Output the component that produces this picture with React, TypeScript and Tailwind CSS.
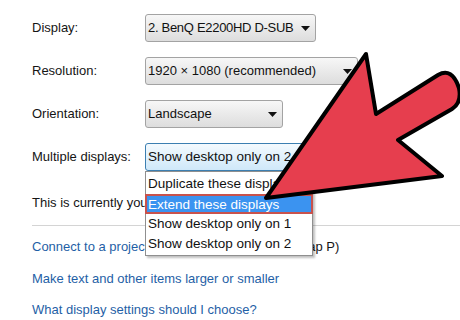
function Caret() {
    return (
        <svg width="9" height="5" viewBox="0 0 9 5" className="shrink-0">
            <polygon points="0,0 9,0 4.5,5" fill="#111" />
        </svg>
    )
}

function WinLogo() {
    return (
        <svg width="11" height="11" viewBox="0 0 11 11" className="inline-block mx-1 align-[-1px]">
            <rect x="0" y="0" width="5" height="5" fill="#f25022" />
            <rect x="6" y="0" width="5" height="5" fill="#7fba00" />
            <rect x="0" y="6" width="5" height="5" fill="#00a4ef" />
            <rect x="6" y="6" width="5" height="5" fill="#ffb900" />
        </svg>
    )
}

function Row({ label, children, first }: { label: string; children: React.ReactNode; first?: boolean }) {
    return (
        <div className={first ? "flex items-center h-[28px] mt-[14px]" : "flex items-center h-[28px] mt-[15px]"}>
            <div className="w-[113px] text-[13px] text-[#151515] whitespace-nowrap">{label}</div>
            {children}
        </div>
    )
}

export default function App() {
    const combo = "flex items-center justify-between h-full pl-[2px] pr-[5px] rounded-[3px] border border-[#a3a3a3] bg-linear-to-b from-[#f7f7f7] to-[#dddddd] text-[13px] text-[#111] whitespace-nowrap"

    return (
        <div className="relative w-[460px] h-[320px] overflow-hidden bg-white font-['Liberation_Sans',Arial,sans-serif]">
            <div className="pl-[32px]">
                <Row label="Display:" first>
                    <div className={combo + " w-[171px]"}>
                        <span className="tracking-[-0.3px]">2. BenQ E2200HD D-SUB</span>
                        <Caret />
                    </div>
                </Row>
                <Row label="Resolution:">
                    <div className={combo + " w-[213px]"}>
                        <span>1920 × 1080 (recommended)</span>
                        <Caret />
                    </div>
                </Row>
                <Row label="Orientation:">
                    <div className={combo + " w-[138px]"}>
                        <span>Landscape</span>
                        <Caret />
                    </div>
                </Row>
                <Row label="Multiple displays:">
                    <div className="flex items-center justify-between h-full w-[200px] pl-[2px] pr-[5px] rounded-[3px] border border-[#3c7fb1] bg-linear-to-b from-[#f4fafe] to-[#cfe8f9] text-[13.5px] text-[#111] whitespace-nowrap">
                        <span>Show desktop only on 2</span>
                        <Caret />
                    </div>
                </Row>

                <div className="mt-[22px] h-[20px] leading-[20px] text-[13px] text-[#151515] whitespace-nowrap">
                    This is currently your main display.
                </div>
                <div className="mt-[12px] h-px bg-[#d4d4d4]" />

                <div className="mt-[11px] h-[20px] leading-[20px] text-[13px] text-[#151515] whitespace-nowrap">
                    <span className="text-[#1f5fa6]">Connect to a projector</span> (or press the<WinLogo />key and tap P)
                </div>
                <div className="mt-[12px] h-[20px] leading-[20px] text-[13px] text-[#1f5fa6] whitespace-nowrap">
                    Make text and other items larger or smaller
                </div>
                <div className="mt-[11px] h-[20px] leading-[20px] text-[13px] text-[#1f5fa6] whitespace-nowrap">
                    What display settings should I choose?
                </div>
            </div>

            {/* open dropdown list */}
            <div className="absolute left-[145px] top-[171px] w-[168px] border border-[#8f8f8f] bg-white shadow-[2px_2px_2px_rgba(0,0,0,0.25)] text-[13.5px] text-[#111] pt-[1px] whitespace-nowrap">
                <div className="h-[21px] leading-[21px] pl-[2px]">Duplicate these displays</div>
                <div className="h-[20px] leading-[18px] pl-[1px] bg-[#3b93f0] text-white border-2 border-[#c9524c] -mx-px">Extend these displays</div>
                <div className="h-[20px] leading-[20px] pl-[2px]">Show desktop only on 1</div>
                <div className="h-[21px] leading-[20px] pl-[2px]">Show desktop only on 2</div>
            </div>

            {/* red pointer arrow */}
            <svg className="absolute inset-0" width="460" height="320" viewBox="0 0 460 320">
                <path
                    d="M266,198 L366,54 L376,114 L438,75 Q452,67 459,88 Q462,103 452,109 L398,140 L442,176 Z"
                    fill="#e63e4e"
                    stroke="#000"
                    strokeWidth="4"
                    strokeLinejoin="round"
                />
            </svg>
        </div>
    )
}
